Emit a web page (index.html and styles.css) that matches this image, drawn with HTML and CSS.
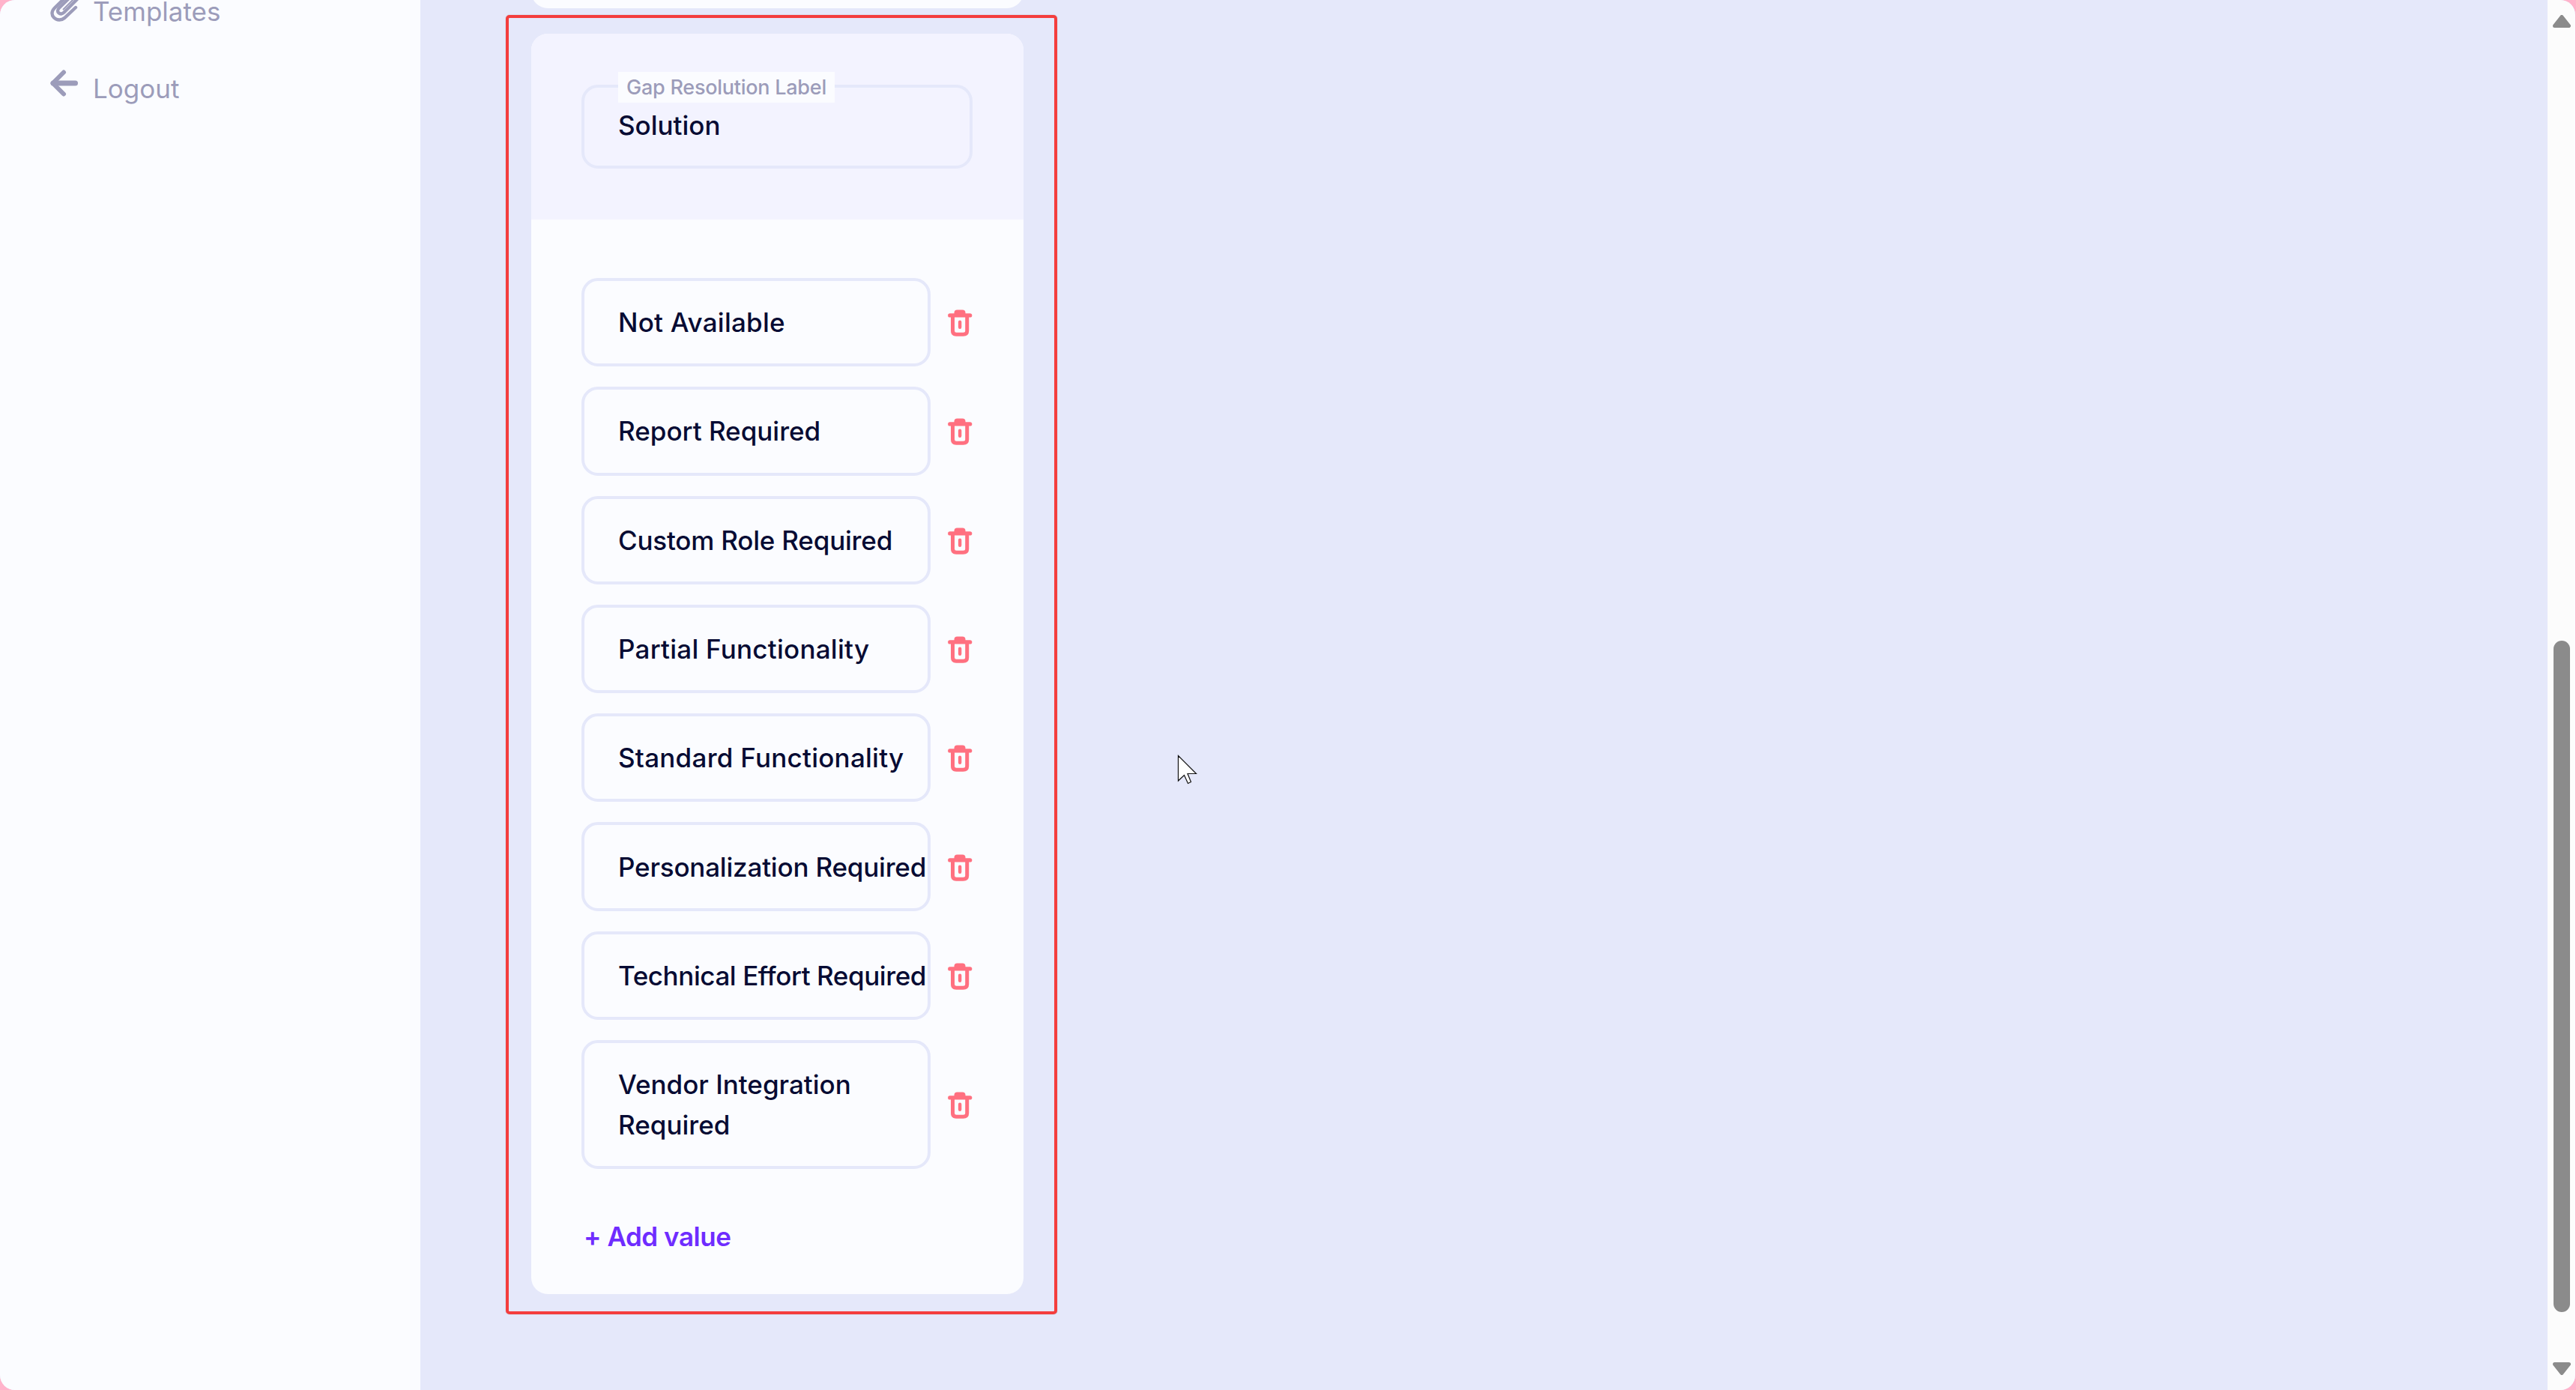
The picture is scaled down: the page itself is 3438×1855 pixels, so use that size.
FILE: index.html
```
<!DOCTYPE html>
<html lang="en">

<head>
  <meta charset="UTF-8">
  <meta name="viewport" content="width=device-width, initial-scale=1.0">
  <title>Gap Resolution</title>
  <link rel="stylesheet" href="styles.css">
</head>

<body>
<svg class="sprite" width="0" height="0">
  <symbol id="trash" viewBox="0 0 33 36">
    <path d="M8.5 7V4.5Q8.5 0.5 12.5 0.5H19.5Q23.5 0.5 23.5 4.5V7Z" fill="#ff7080"/>
    <path d="M2.8 7.9H29.6" stroke="#ff7080" stroke-width="5.4" stroke-linecap="round"/>
    <path d="M6.5 8.5V28.5Q6.5 33.2 11.5 33.2H20.5Q25.7 33.2 25.7 28.5V8.5" fill="none" stroke="#ff7080" stroke-width="5"/>
    <path d="M16.1 16.8V23.8" stroke="#ff7080" stroke-width="4.4" stroke-linecap="round"/>
  </symbol>
</svg>
<div class="window">
  <div class="sidebar">
    <a class="nav_item">
      <svg class="icon_clip" viewBox="65 -6 40 36" width="40" height="36">
        <path d="M91 -7L73 10.5C68.5 15 68.5 20 72 23.5C76 27.5 82 27.5 86 24L101 10" fill="none" stroke="#9c9cba" stroke-width="4.4" stroke-linecap="round"/>
        <path d="M97 -7L79 10.5C76.5 13 76.5 15.5 78.3 17.2C80.2 19 83 19 85.5 16.5L107 -5" fill="none" stroke="#9c9cba" stroke-width="4.4"/>
        <path d="M84 13L103 -6" stroke="#9c9cba" stroke-width="2"/>
      </svg>
      Templates
    </a>
    <a class="nav_item">
      <svg class="icon_back" viewBox="0 0 40 36" width="40" height="36">
        <path d="M20 3.5L5.5 18L20 32.5" fill="none" stroke="#9c9cba" stroke-width="6" stroke-linecap="round" stroke-linejoin="round"/>
        <path d="M6 18H35.5" stroke="#9c9cba" stroke-width="7" stroke-linecap="round"/>
      </svg>
      Logout
    </a>
  </div>

  <div class="content">
    <div class="card card_prev"></div>
    <div class="card">
      <div class="card_head">
        <div class="field">
          <label class="field_label">Gap Resolution Label</label>
          <div class="field_value">Solution</div>
        </div>
      </div>
      <div class="card_body">
        <div class="row"><div class="value ls_wide">Not Available</div><svg class="trash"><use href="#trash"/></svg></div>
        <div class="row"><div class="value">Report Required</div><svg class="trash"><use href="#trash"/></svg></div>
        <div class="row"><div class="value ls_tight">Custom Role Required</div><svg class="trash"><use href="#trash"/></svg></div>
        <div class="row"><div class="value ls_wide">Partial Functionality</div><svg class="trash"><use href="#trash"/></svg></div>
        <div class="row"><div class="value ls_wide">Standard Functionality</div><svg class="trash"><use href="#trash"/></svg></div>
        <div class="row"><div class="value ls_tight">Personalization Required</div><svg class="trash"><use href="#trash"/></svg></div>
        <div class="row"><div class="value ls_tighter">Technical Effort Required</div><svg class="trash"><use href="#trash"/></svg></div>
        <div class="row"><div class="value">Vendor Integration<br>Required</div><svg class="trash"><use href="#trash"/></svg></div>
        <a class="add_value">+ Add value</a>
      </div>
    </div>
  </div>

  <div class="scrollbar">
    <svg width="24" height="17" viewBox="0 0 24 17"><path d="M12 2.5L21.5 14.5H2.5Z" fill="#8b8b8b" stroke="#8b8b8b" stroke-width="5" stroke-linejoin="round"/></svg>
    <div class="thumb"></div>
    <svg width="24" height="17" viewBox="0 0 24 17"><path d="M12 14.5L21.5 2.5H2.5Z" fill="#8b8b8b" stroke="#8b8b8b" stroke-width="5" stroke-linejoin="round"/></svg>
  </div>
</div>

<div class="highlight"></div>
<svg class="cursor" viewBox="0 0 28 40" width="28" height="40">
  <path d="M1.5 1.5V35L9.5 27.5L14.5 38.5L18.5 36.5L14 25.5H25.5Z" fill="#fff" stroke="#111" stroke-width="1.2"/>
</svg>
</body>

</html>
```
FILE: styles.css
```
body {
  margin: 0;
  width: 3438px;
  height: 1855px;
  overflow: hidden;
  background: #ffb3cb;
  font-family: Inter, "Liberation Sans", sans-serif;
  font-size: 35px;
}

.sprite {
  position: absolute;
}

.window {
  display: flex;
  width: 3437px;
  height: 1855px;
  overflow: hidden;
  border-radius: 20px;
  background: #e5e8fa;
}

/* sidebar */
.sidebar {
  width: 561px;
  flex: none;
  background: #fbfcff;
}

.nav_item {
  display: flex;
  align-items: center;
  gap: 19px;
  height: 103px;
  padding-left: 65px;
  color: #9c9cba;
}

.nav_item:first-child {
  margin-top: -37px;
}

.icon_clip {
  margin-bottom: 5px;
}

.icon_back {
  margin-bottom: 14px;
}

/* content */
.content {
  flex: 1;
  padding-left: 148px;
}

.card {
  width: 657px;
  border-radius: 22px;
  overflow: hidden;
  background: #fbfcff;
}

.card_prev {
  height: 60px;
  margin-top: -49px;
  margin-bottom: 34px;
}

.card_head {
  height: 180px;
  padding: 68px 68px 0 67px;
  background: #f3f3ff;
}

.field {
  position: relative;
  box-sizing: border-box;
  height: 112px;
  padding: 23px 45px;
  border: 4px solid #e5e8fa;
  border-radius: 22px;
}

.field_label {
  position: absolute;
  left: 45px;
  top: -21px;
  width: 289px;
  height: 41px;
  line-height: 42px;
  text-align: center;
  font-size: 27px;
  font-weight: 500;
  letter-spacing: -0.25px;
  color: #9c9cba;
  background: #fbfcff;
}

.field_value {
  line-height: 54px;
  font-weight: 500;
  color: #070b33;
}

.card_body {
  display: flex;
  flex-direction: column;
  gap: 27px;
  padding: 78px 68px 50px 67px;
}

.row {
  display: flex;
  align-items: center;
  justify-content: space-between;
}

.value {
  box-sizing: border-box;
  width: 466px;
  padding: 28.15px 0 28.15px 45px;
  border: 4px solid #e5e8fa;
  border-radius: 22px;
  line-height: 54px;
  font-weight: 500;
  white-space: nowrap;
  color: #070b33;
}

.ls_wide {
  letter-spacing: 0.25px;
}

.ls_tight {
  letter-spacing: -0.2px;
}

.ls_tighter {
  letter-spacing: -0.42px;
}

.trash {
  width: 33px;
  height: 36px;
  margin-top: 2px;
}

.add_value {
  margin-top: 36px;
  padding-left: 3px;
  line-height: 54px;
  font-weight: 600;
  letter-spacing: -0.45px;
  color: #6f2cff;
}

/* scrollbar */
.scrollbar {
  display: flex;
  flex-direction: column;
  align-items: center;
  justify-content: space-between;
  box-sizing: border-box;
  width: 37px;
  padding: 20px 0;
  background: #fcfcfc;
}

.thumb {
  width: 22px;
  height: 896px;
  margin-top: 751px;
  border-radius: 11px;
  background: #8b8b8b;
}

/* overlays */
.highlight {
  position: absolute;
  left: 675px;
  top: 20px;
  width: 728px;
  height: 1726px;
  border: 4px solid #f43d3d;
  border-radius: 5px;
  box-shadow: 0 0 1px #777;
}

.cursor {
  position: absolute;
  left: 1571px;
  top: 1007px;
}
```
